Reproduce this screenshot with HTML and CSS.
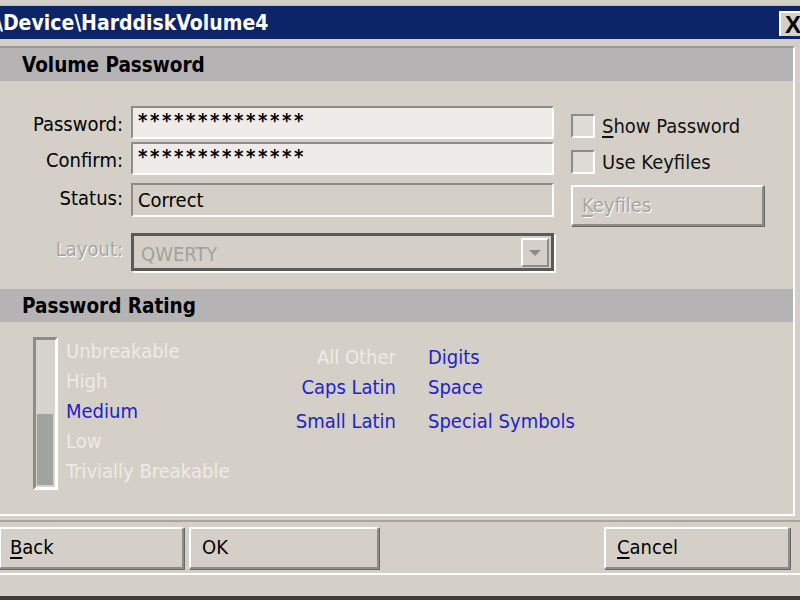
FILE: index.html
```html
<!DOCTYPE html>
<html>
<head>
  <meta charset="UTF-8" />
  <title>Volume Password</title>
  <link rel="stylesheet" href="styles.css">
</head>
<body>
  <div class="titlebar">
    <span class="title">\Device\HarddiskVolume4</span>
    <span class="close">X</span>
  </div>

  <div class="panel">
    <div class="band">Volume Password</div>

    <div class="row first">
      <div class="label">Password:</div>
      <div class="field edit">**************</div>
      <div class="side"><span class="check"></span><u>S</u>how Password</div>
    </div>
    <div class="row tight">
      <div class="label">Confirm:</div>
      <div class="field edit">**************</div>
      <div class="side"><span class="check"></span>Use Keyfiles</div>
    </div>
    <div class="row status">
      <div class="label">Status:</div>
      <div class="field static">Correct</div>
      <div class="side"><span class="btn disabled keyfiles"><u>K</u>eyfiles</span></div>
    </div>
    <div class="row layout">
      <div class="label disabled">Layout:</div>
      <div class="field combo">
        <span class="combo-text">QWERTY</span>
        <span class="combo-arrow"></span>
      </div>
    </div>

    <div class="band second">Password Rating</div>

    <div class="rating">
      <div class="meter"><div class="meter-fill" style="height: 49%"></div></div>
      <ul class="levels">
        <li>Unbreakable</li>
        <li>High</li>
        <li class="on">Medium</li>
        <li>Low</li>
        <li>Trivially Breakable</li>
      </ul>
      <div class="classes">
        <span class="right">All Other</span><span class="on">Digits</span>
        <span class="right on">Caps Latin</span><span class="on">Space</span>
        <span class="right on last">Small Latin</span><span class="on last">Special Symbols</span>
      </div>
    </div>
  </div>

  <div class="buttons">
    <span class="btn back"><u>B</u>ack</span>
    <span class="btn ok">OK</span>
    <span class="btn cancel"><u>C</u>ancel</span>
  </div>

  <div class="bottom-edge"></div>
</body>
</html>
```

FILE: styles.css
```css
body {
  margin: 0;
  width: 800px;
  height: 600px;
  overflow: hidden;
  background: #d4d0c8;
  color: #000;
  font-family: "DejaVu Sans Condensed", "DejaVu Sans", sans-serif;
  font-stretch: condensed;
  font-size: 20px;
  display: flex;
  flex-direction: column;
}
u {
  text-decoration-thickness: 2px;
  text-underline-offset: 3px;
}

/* caption */
.titlebar {
  margin-top: 5px;
  border-top: 1px solid #bdbdbd;
  height: 33px;
  background: #0c2468;
  display: flex;
  align-items: center;
  justify-content: space-between;
}
.title {
  color: #fff;
  font-weight: bold;
  font-size: 21px;
  margin-left: -4px;
}
.close {
  width: 21px;
  height: 25px;
  margin-top: 2px;
  box-sizing: border-box;
  background: #d4d0c8;
  border-top: 2px solid #fff;
  border-left: 2px solid #fff;
  font-family: "Liberation Sans", sans-serif;
  font-weight: bold;
  font-size: 24px;
  line-height: 23px;
  padding-left: 4px;
  overflow: hidden;
}

/* main group */
.panel {
  margin-top: 7px;
  width: 795px;
  height: 470px;
  box-sizing: border-box;
  border-top: 2px solid #9c9a98;
  border-right: 2px solid #fff;
  border-bottom: 2px solid #fff;
}
.band {
  background: #b5b3b3;
  height: 33px;
  line-height: 34px;
  padding-left: 22px;
  font-weight: bold;
  font-size: 20.5px;
}
.band.second {
  margin-top: 18px;
}

.row {
  display: flex;
  height: 33px;
  align-items: flex-start;
}
.row.first { margin-top: 25px; }
.row.tight { margin-top: 3px; }
.row.status { margin-top: 8px; height: 34px; }
.row.layout { margin-top: 16px; height: 38px; }

.label {
  width: 123px;
  margin-right: 8px;
  text-align: right;
  line-height: 36px;
  flex-shrink: 0;
}
.status .label { line-height: 30px; }
.layout .label { line-height: 32px; }
.disabled {
  color: #a7a5a2;
  text-shadow: 1px 1px 0 #fff;
}

.field {
  width: 423px;
  height: 100%;
  box-sizing: border-box;
  border: 2px solid;
  border-color: #8e8c89 #fff #fff #8e8c89;
  padding-left: 5px;
  flex-shrink: 0;
}
.edit {
  background: #efebe8;
  line-height: 24px;
  letter-spacing: 2.6px;
  font-weight: bold;
}
.static {
  line-height: 30px;
}
.combo {
  border: 3px solid #5b5a58;
  box-shadow: 2px 2px 0 #fff;
  display: flex;
  align-items: center;
  justify-content: space-between;
  padding: 0 2px 0 7px;
}
.combo-text {
  color: #a3a19e;
  margin-top: 3px;
}
.combo-arrow {
  width: 28px;
  height: 29px;
  box-sizing: border-box;
  border: 2px solid;
  border-color: #fff #8e8c89 #8e8c89 #fff;
  position: relative;
}
.combo-arrow::after {
  content: "";
  position: absolute;
  left: 6px;
  top: 10px;
  border-left: 6px solid transparent;
  border-right: 6px solid transparent;
  border-top: 6px solid #8e8c89;
}

.side {
  margin-left: 17px;
  display: flex;
  align-items: center;
  height: 100%;
  color: #111;
  padding-top: 3px;
}
.check {
  width: 24px;
  height: 24px;
  box-sizing: border-box;
  border: 2px solid;
  border-color: #8e8c89 #fff #fff #8e8c89;
  background: #dedad5;
  margin-right: 7px;
}

/* buttons */
.btn {
  display: block;
  box-sizing: border-box;
  height: 42px;
  line-height: 36px;
  padding-left: 9px;
  border: 2px solid;
  border-color: #fff #8e8c89 #8e8c89 #fff;
  box-shadow: 1px 1px 0 #6a6866;
}
.status .side {
  align-items: flex-start;
  padding-top: 0;
}
.keyfiles {
  width: 193px;
  margin-top: 2px;
  height: 41px;
}
.btn.disabled {
  color: #a7a5a2;
}

/* rating */
.rating {
  display: flex;
  margin-top: 14px;
  padding-left: 33px;
}
.meter {
  width: 25px;
  height: 153px;
  box-sizing: border-box;
  border: 3px solid;
  border-color: #8e8c89 #fff #fff #8e8c89;
  background: #d6d3cf;
  display: flex;
  align-items: flex-end;
  padding: 0 2px 2px 1px;
  margin-top: 1px;
}
.meter-fill {
  width: 100%;
  background: #a2a29f;
}
.levels {
  list-style: none;
  margin: 0 0 0 8px;
  padding: 0;
  width: 224px;
  color: #edebe7;
}
.levels li {
  line-height: 30px;
}
.on {
  color: #2222c8 !important;
}
.classes {
  display: grid;
  grid-template-columns: 106px auto;
  column-gap: 32px;
  align-content: start;
  margin-top: 6px;
  color: #edebe7;
}
.classes span {
  line-height: 30px;
}
.classes .right {
  text-align: right;
}
.classes .last {
  margin-top: 4px;
}

.buttons {
  margin-top: 4px;
  border-top: 2px solid #a8a6a3;
  border-bottom: 2px solid #fff;
  padding: 5px 0 4px;
  display: flex;
}
.back { width: 185px; margin-left: -1px; }
.ok { width: 190px; margin-left: 5px; padding-left: 11px; }
.cancel { width: 186px; margin-left: 225px; padding-left: 11px; }

.bottom-edge {
  margin-top: auto;
  height: 4px;
  background: #3c3c3c;
}
```
